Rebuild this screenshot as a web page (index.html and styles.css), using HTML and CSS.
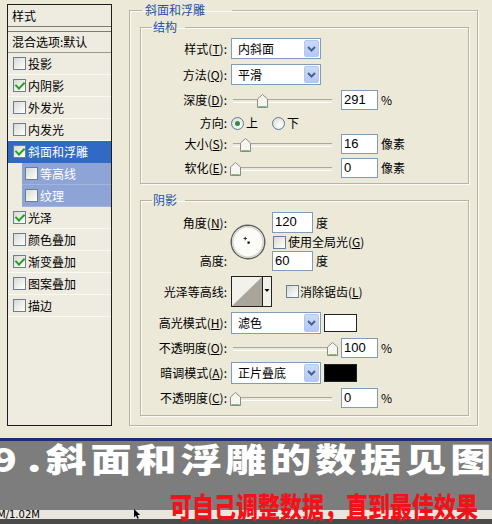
FILE: index.html
```html
<!DOCTYPE html>
<html>
<head>
<meta charset="utf-8">
<link rel="stylesheet" href="styles.css">
</head>
<body>
<div class="dialog">
  <div class="list">
    <div class="item head">样式</div>
    <div class="item blend">混合选项:默认</div>
    <div class="item"><span class="cb"></span>投影</div>
    <div class="item"><span class="cb on"></span>内阴影</div>
    <div class="item"><span class="cb"></span>外发光</div>
    <div class="item"><span class="cb"></span>内发光</div>
    <div class="item sel"><span class="cb on"></span>斜面和浮雕</div>
    <div class="item sub"><span class="cb"></span>等高线</div>
    <div class="item sub"><span class="cb"></span>纹理</div>
    <div class="item"><span class="cb on"></span>光泽</div>
    <div class="item"><span class="cb"></span>颜色叠加</div>
    <div class="item"><span class="cb on"></span>渐变叠加</div>
    <div class="item"><span class="cb"></span>图案叠加</div>
    <div class="item"><span class="cb"></span>描边</div>
  </div>

  <fieldset class="group outer">
    <legend>斜面和浮雕</legend>

    <fieldset class="group struct">
      <legend>结构</legend>
      <div class="row h21">
        <span class="lbl">样式(<u>T</u>):</span>
        <div class="select"><span>内斜面</span><span class="arrow"><svg width="9" height="6" viewBox="0 0 9 6"><path d="M1 1l3.5 3.5L8 1" fill="none" stroke="#4d6185" stroke-width="2"/></svg></span></div>
      </div>
      <div class="row h21 m5">
        <span class="lbl">方法(<u>Q</u>):</span>
        <div class="select"><span>平滑</span><span class="arrow"><svg width="9" height="6" viewBox="0 0 9 6"><path d="M1 1l3.5 3.5L8 1" fill="none" stroke="#4d6185" stroke-width="2"/></svg></span></div>
      </div>
      <div class="row h20 m5">
        <span class="lbl">深度(<u>D</u>):</span>
        <div class="slider"><svg class="thumb" style="left:26px" width="11" height="14" viewBox="0 0 11 14"><path d="M0.5 13.5V5L5.5 0.5L10.5 5V13.5Z" fill="#f6f5f0" stroke="#8c8b84"/><path d="M1.5 12.5H9.5" stroke="#7cc47c"/></svg></div>
        <span class="num">291</span><span class="unit">%</span>
      </div>
      <div class="row h20 m3">
        <span class="lbl">方向:</span>
        <span class="radio on"></span><span class="rtext">上</span>
        <span class="radio r2"></span><span class="rtext">下</span>
      </div>
      <div class="row h20 m1">
        <span class="lbl">大小(<u>S</u>):</span>
        <div class="slider"><svg class="thumb" style="left:9px" width="11" height="14" viewBox="0 0 11 14"><path d="M0.5 13.5V5L5.5 0.5L10.5 5V13.5Z" fill="#f6f5f0" stroke="#8c8b84"/><path d="M1.5 12.5H9.5" stroke="#7cc47c"/></svg></div>
        <span class="num">16</span><span class="unit">像素</span>
      </div>
      <div class="row h20 m4">
        <span class="lbl">软化(<u>E</u>):</span>
        <div class="slider"><svg class="thumb" style="left:-1px" width="11" height="14" viewBox="0 0 11 14"><path d="M0.5 13.5V5L5.5 0.5L10.5 5V13.5Z" fill="#f6f5f0" stroke="#8c8b84"/><path d="M1.5 12.5H9.5" stroke="#7cc47c"/></svg></div>
        <span class="num">0</span><span class="unit">像素</span>
      </div>
    </fieldset>

    <fieldset class="group shadow">
      <legend>阴影</legend>
      <div class="angle">
        <span class="lbl a1">角度(<u>N</u>):</span>
        <span class="lbl a3">高度:</span>
        <svg class="dial" width="36" height="36" viewBox="0 0 36 36">
          <circle cx="18" cy="18" r="16.8" fill="#fbfbf8" stroke="#5c5c5c" stroke-width="1.4"/>
          <circle cx="18" cy="18" r="15.2" fill="none" stroke="#d6d5cc" stroke-width="1.6"/>
          <path d="M13.5 14.5h3.5M15.25 12.75v3.5" stroke="#222" stroke-width="0.9"/>
          <rect x="17.5" y="17.5" width="2.2" height="2.2" fill="#000"/>
        </svg>
        <div class="af f1"><span class="num w41">120</span><span class="unit">度</span></div>
        <div class="af f2"><span class="cb g"></span>使用全局光(<u>G</u>)</div>
        <div class="af f3"><span class="num w41">60</span><span class="unit">度</span></div>
      </div>
      <div class="row h30 m5">
        <span class="lbl">光泽等高线:</span>
        <svg class="contour" width="41" height="31" viewBox="0 0 41 31">
          <rect x="0.5" y="0.5" width="40" height="30" fill="#f3f2ea" stroke="#222"/>
          <path d="M1 30L31 1V30Z" fill="#a9a59a"/>
          <path d="M31.5 0.5V30.5" stroke="#222"/>
          <path d="M33.5 13h5l-2.5 3z" fill="#000"/>
        </svg>
        <span class="cb aa"></span>消除锯齿(<u>L</u>)
      </div>
      <div class="row h22 m6">
        <span class="lbl">高光模式(<u>H</u>):</span>
        <div class="select"><span>滤色</span><span class="arrow"><svg width="9" height="6" viewBox="0 0 9 6"><path d="M1 1l3.5 3.5L8 1" fill="none" stroke="#4d6185" stroke-width="2"/></svg></span></div>
        <span class="swatch white"></span>
      </div>
      <div class="row h20 m4">
        <span class="lbl">不透明度(<u>O</u>):</span>
        <div class="slider"><svg class="thumb" style="left:96px" width="11" height="14" viewBox="0 0 11 14"><path d="M0.5 13.5V5L5.5 0.5L10.5 5V13.5Z" fill="#f6f5f0" stroke="#8c8b84"/><path d="M1.5 12.5H9.5" stroke="#7cc47c"/></svg></div>
        <span class="num">100</span><span class="unit">%</span>
      </div>
      <div class="row h22 m4">
        <span class="lbl">暗调模式(<u>A</u>):</span>
        <div class="select"><span>正片叠底</span><span class="arrow"><svg width="9" height="6" viewBox="0 0 9 6"><path d="M1 1l3.5 3.5L8 1" fill="none" stroke="#4d6185" stroke-width="2"/></svg></span></div>
        <span class="swatch black"></span>
      </div>
      <div class="row h20 m4">
        <span class="lbl">不透明度(<u>C</u>):</span>
        <div class="slider"><svg class="thumb" style="left:-1px" width="11" height="14" viewBox="0 0 11 14"><path d="M0.5 13.5V5L5.5 0.5L10.5 5V13.5Z" fill="#f6f5f0" stroke="#8c8b84"/><path d="M1.5 12.5H9.5" stroke="#7cc47c"/></svg></div>
        <span class="num">0</span><span class="unit">%</span>
      </div>
    </fieldset>
  </fieldset>
</div>

<div class="navy"></div>
<div class="banner">
  <div class="title"><span class="n">9</span>.斜面和浮雕的数据见图</div>
  <div class="foot">
    <span class="status">M/1.02M</span>
    <svg class="cursor" width="7" height="10" viewBox="0 0 7 10"><path d="M0 0V8.5L2 6.6L3.4 9.8L4.8 9.2L3.4 6H6.2Z" fill="#000"/></svg>
    <span class="red">可自己调整数据，直到最佳效果</span>
  </div>
</div>
<div class="taskbar"></div>
</body>
</html>
```

FILE: styles.css
```css
* { box-sizing: border-box; }
html, body { margin: 0; padding: 0; }
body {
  width: 492px;
  height: 524px;
  overflow: hidden;
  background: #ece9d8;
  color: #000;
  font: 12px/14px "Noto Sans CJK SC", "Liberation Sans", sans-serif;
}
u { text-decoration: underline; text-underline-offset: 1px; }

.dialog {
  height: 438px;
  display: flex;
  align-items: flex-start;
  padding-top: 3px;
}

/* left list */
.list {
  margin: 1px 0 0 7px;
  width: 105px;
  height: 422px;
  border: 1px solid #1e1e1e;
  background: #eeebe0;
  flex: none;
}
.item {
  height: 22px;
  display: flex;
  align-items: center;
  padding-left: 5px;
  border-bottom: 1px solid #faf9f4;
  white-space: nowrap;
}
.item.head {
  padding-left: 4px;
  border-bottom: 1px solid #7d7b72;
}
.item.blend {
  margin-top: 4px;
  padding-left: 4px;
  border-top: 1px solid #7d7b72;
  border-bottom: 1px solid #9a988e;
}
.item.sel { background: #316ac5; color: #fff; border-bottom-color: #316ac5; }
.item.sub {
  margin-left: 14px;
  padding-left: 3px;
  background: #8ea4d6;
  color: #fff;
  border-bottom-color: #a2b4de;
}

.cb {
  width: 13px;
  height: 13px;
  flex: none;
  position: relative;
  margin-right: 2px;
  border: 1px solid #6b7e94;
  background: linear-gradient(135deg, #d9d9d2, #ffffff);
}
.cb.on::after {
  content: "";
  position: absolute;
  left: 3px;
  top: 0px;
  width: 4px;
  height: 7px;
  border: solid #21a121;
  border-width: 0 2px 2px 0;
  transform: rotate(45deg);
}

/* group boxes */
.group {
  margin: 0;
  padding: 0;
  min-width: 0;
  border: 1px solid #b7b4a5;
  box-shadow: 1px 1px 0 #fbfaf6, inset 1px 1px 0 #fbfaf6;
}
.group > legend {
  margin-left: 11px;
  padding: 0 8px 0 1px;
  color: #1d52a8;
  font-size: 12px;
  line-height: 14px;
}
.outer {
  flex: none;
  margin-left: 17px;
  width: 349px;
  padding: 3px 8px 9px 10px;
}
.outer > legend { margin-left: 2px; padding: 0 27px 0 3px; }
.struct { padding: 4px 0 5px 0; }
.shadow { margin-top: 9px; padding: 5px 0 7px 0; }

/* rows */
.row { display: flex; align-items: center; white-space: nowrap; }
.h20 { height: 20px; }
.h21 { height: 21px; }
.h22 { height: 22px; }
.h30 { height: 31px; }
.m1 { margin-top: 1px; }
.m3 { margin-top: 3px; }
.m4 { margin-top: 4px; }
.m5 { margin-top: 5px; }
.m6 { margin-top: 5px; }

.lbl {
  width: 90px;
  padding-right: 4px;
  text-align: right;
  flex: none;
  white-space: nowrap;
}

.select {
  width: 90px;
  height: 100%;
  flex: none;
  display: flex;
  align-items: center;
  padding-left: 6px;
  border: 1px solid #7f9db9;
  background: #fff;
}
.select .arrow {
  margin-left: auto;
  margin-right: 1px;
  width: 15px;
  height: calc(100% - 2px);
  display: flex;
  align-items: center;
  justify-content: center;
  border-radius: 2px;
  background: linear-gradient(#cbdafc, #b4c8f6);
  border: 1px solid #b5c6ee;
}

.slider {
  position: relative;
  width: 110px;
  height: 20px;
  flex: none;
}
.slider::before {
  content: "";
  position: absolute;
  left: 2px;
  right: 9px;
  top: 9px;
  height: 2px;
  border-top: 1px solid #a9a89e;
  border-bottom: 1px solid #ffffff;
}
.thumb { position: absolute; top: 4px; }

.num {
  width: 37px;
  height: 20px;
  flex: none;
  padding-left: 2px;
  border: 1px solid #7f9db9;
  background: #fff;
  font: 13px/18px "Liberation Sans", sans-serif;
}
.num.w41 { width: 41px; height: 100%; }
.unit { margin-left: 3px; }

.radio {
  width: 13px;
  height: 13px;
  flex: none;
  position: relative;
  border-radius: 50%;
  border: 1px solid #5d7a96;
  background: radial-gradient(circle at 65% 65%, #ffffff, #d8d8cf);
}
.radio.on::after {
  content: "";
  position: absolute;
  left: 3px;
  top: 3px;
  width: 5px;
  height: 5px;
  border-radius: 50%;
  background: #2f8a45;
}
.radio.r2 { margin-left: 14px; }
.rtext { margin-left: 2px; }

/* angle block */
.angle {
  display: grid;
  grid-template-columns: 90px 41px 1fr;
  grid-template-rows: 21px 18px 20px;
}
.a1 { grid-column: 1; grid-row: 1; align-self: center; }
.a3 { grid-column: 1; grid-row: 3; align-self: center; }
.dial { grid-column: 2; grid-row: 1 / 4; align-self: center; margin-left: -1px; }
.af { grid-column: 3; display: flex; align-items: center; white-space: nowrap; }
.f1 { grid-row: 1; }
.f2 { grid-row: 2; }
.f3 { grid-row: 3; }
.cb.g { margin-left: 1px; margin-right: 2px; }

.contour { flex: none; }
.cb.aa { margin-left: 14px; margin-right: 1px; }

.swatch {
  margin-left: 3px;
  width: 33px;
  height: 18px;
  border: 1px solid #222;
  flex: none;
}
.swatch.white { background: #fff; }
.swatch.black { background: #000; }

/* banner */
.navy { height: 3px; background: #1b2f73; }
.banner {
  height: 78px;
  display: flex;
  flex-direction: column;
  justify-content: space-between;
  background: linear-gradient(#7d7d7d 0 69px, #e9e7dd 69px);
}
.title {
  margin-left: -8px;
  color: #fff;
  font: 900 41px/34px "Noto Sans CJK SC", sans-serif;
  letter-spacing: 4px;
  white-space: nowrap;
  transform: scaleY(0.8);
}
.title .n { margin-right: 6px; }
.foot { display: flex; align-items: flex-end; height: 30px; }
.status {
  margin-left: -3px;
  font: 10px/9px "DejaVu Sans", sans-serif;
  white-space: nowrap;
}
.cursor { margin-left: 94px; flex: none; }
.red {
  margin-left: auto;
  margin-right: 14px;
  color: #f0141a;
  font: 900 22px/22px "Noto Sans CJK SC", sans-serif;
  white-space: nowrap;
  transform: scaleY(1.3);
  transform-origin: bottom;
}
.taskbar { height: 5px; background: #4b4b4b; }
```
